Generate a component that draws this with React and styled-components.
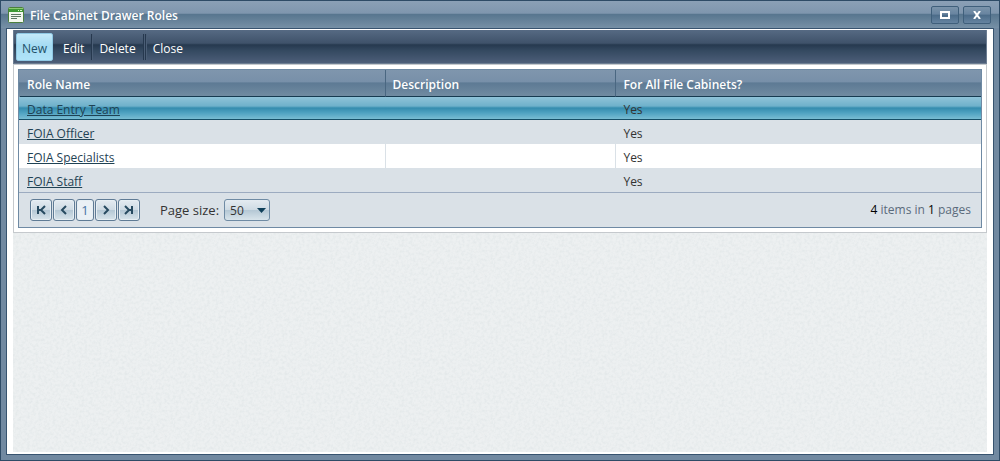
import React, { useState } from 'react'
import styled, { createGlobalStyle } from 'styled-components'

const roles = [
  { name: 'Data Entry Team', description: '', all: 'Yes' },
  { name: 'FOIA Officer', description: '', all: 'Yes' },
  { name: 'FOIA Specialists', description: '', all: 'Yes' },
  { name: 'FOIA Staff', description: '', all: 'Yes' },
]

// paper grain behind the grid
const grain = `url("data:image/svg+xml,${encodeURIComponent(
  '<svg xmlns="http://www.w3.org/2000/svg" width="160" height="160"><filter id="n"><feTurbulence type="fractalNoise" baseFrequency="0.35" numOctaves="3" stitchTiles="stitch"/><feColorMatrix values="0 0 0 0 0.5  0 0 0 0 0.58  0 0 0 0 0.6  0.4 0 0 0 -0.15"/></filter><rect width="160" height="160" filter="url(#n)"/></svg>'
).replace(/\(/g, '%28').replace(/\)/g, '%29')}")`

const App = () => {
  const [selected, setselected] = useState(0)
  const [size, setsize] = useState('50')

  return (<>
    <GlobalStyle />
    <Window>
      <TitleBar>
        <WindowIcon />
        <Title>File Cabinet Drawer Roles</Title>
        <WindowButton type="button" aria-label="Maximize">
          <svg width="10" height="8" viewBox="0 0 10 8">
            <rect x="1" y="1" width="8" height="6" fill="none" stroke="#fff" strokeWidth="2" />
          </svg>
        </WindowButton>
        <WindowButton type="button" aria-label="Close window">
          <svg width="8" height="8" viewBox="0 0 8 8">
            <path d="M1 0L7 8M7 0L1 8" stroke="#fff" strokeWidth="2" />
          </svg>
        </WindowButton>
      </TitleBar>

      <Content>
        <Toolbar>
          <ToolButton type="button" $active>New</ToolButton>
          <ToolButton type="button">Edit</ToolButton>
          <Divider />
          <ToolButton type="button">Delete</ToolButton>
          <Divider />
          <Divider />
          <ToolButton type="button">Close</ToolButton>
        </Toolbar>

        <Panel>
          <Grid>
            <Table>
              <colgroup>
                <col width="38%" />
                <col width="24%" />
                <col />
              </colgroup>
              <thead>
                <tr>
                  <HeadCell>Role Name</HeadCell>
                  <HeadCell>Description</HeadCell>
                  <HeadCell>For All File Cabinets?</HeadCell>
                </tr>
              </thead>
              <tbody>
                {roles.map((role, i) => (
                  <Row key={role.name} $selected={i === selected} $alt={i % 2 === 1}
                    onClick={() => setselected(i)}>
                    <Cell><RoleLink href="#">{role.name}</RoleLink></Cell>
                    <Cell>{role.description}</Cell>
                    <Cell>{role.all}</Cell>
                  </Row>
                ))}
              </tbody>
            </Table>

            <Pager>
              <PageButtons>
                <PageButton type="button" aria-label="First page"><Arrow d="M2 1V9M9 1L5 5L9 9M3 5H5" /></PageButton>
                <PageButton type="button" aria-label="Previous page"><Arrow d="M7 1L3 5L7 9" /></PageButton>
                <PageButton type="button" $current>1</PageButton>
                <PageButton type="button" aria-label="Next page"><Arrow d="M3 1L7 5L3 9" /></PageButton>
                <PageButton type="button" aria-label="Last page"><Arrow d="M8 1V9M1 1L5 5L1 9M7 5H5" /></PageButton>
              </PageButtons>
              <SizeLabel htmlFor="page-size">Page size:</SizeLabel>
              <SelectBox>
                <Select id="page-size" value={size} onChange={(e) => setsize(e.target.value)}>
                  <option>10</option>
                  <option>20</option>
                  <option>50</option>
                </Select>
                <Caret width="9" height="5" viewBox="0 0 9 5"><path d="M0 0H9L4.5 5Z" fill="#10405a" /></Caret>
              </SelectBox>
              <Info><b>4</b> items in <b>1</b> pages</Info>
            </Pager>
          </Grid>
        </Panel>
      </Content>
    </Window>
  </>)
}

const WindowIcon = () => (
  <svg width="16" height="16" viewBox="0 0 16 16">
    <rect x="0.5" y="0.5" width="15" height="15" rx="1" fill="#f4f8ef" stroke="#4b7f3c" />
    <rect x="1" y="1" width="14" height="4" fill="#3f9a35" />
    <rect x="1" y="1" width="14" height="1" fill="#8ccb72" />
    <path d="M10 3.5H11M12 3.5H14" stroke="#d9f2c8" />
    <path d="M3 7.5H13M3 9.5H13M3 11.5H9" stroke="#5e7863" />
  </svg>
)

const Arrow = ({ d }) => (
  <svg width="10" height="10" viewBox="0 0 10 10">
    <path d={d} fill="none" stroke="#274a60" strokeWidth="2" />
  </svg>
)

const GlobalStyle = createGlobalStyle`
  * {
    box-sizing: border-box;
  }
  body {
    margin: 0;
    font-family: "Open Sans", "Noto Sans", sans-serif;
    font-size: 12px;
    line-height: 16px;
    color: #333;
  }
  button, select {
    font: inherit;
  }
`

const Window = styled.div`
display: flex;
flex-direction: column;
min-height: 100vh;
padding: 0 5px 5px;
border: 1px solid #2e4b66;
background: #7189a1;
`

const TitleBar = styled.header`
display: flex;
align-items: center;
gap: 4px;
height: 27px;
margin: 0 -5px;
padding: 0 8px 0 7px;
background: linear-gradient(#8ba0b6, #7f96ae 45%, #58768f 50%, #7690a6);
`

const Title = styled.h1`
flex: 1;
margin: 0;
padding: 2px 0 0 2px;
font-size: 12px;
font-weight: 600;
color: #fff;
`

const WindowButton = styled.button`
display: flex;
align-items: center;
justify-content: center;
width: 28px;
height: 18px;
padding: 0;
border: 1px solid #3f5f7b;
border-radius: 2px;
background: linear-gradient(#7b94ab, #6884a0 45%, #4b6b88 50%, #6583a0);
`

const Content = styled.main`
flex: 1;
padding: 1px 6px 2px;
border: 1px solid #37536f;
background:
  ${grain} content-box,
  linear-gradient(#edf0f1, #edf0f1) content-box,
  #fff;
`

const Toolbar = styled.nav`
display: flex;
align-items: center;
height: 34px;
padding: 0 2px;
border: 1px solid #6c7d92;
border-width: 0 1px 1px;
background: linear-gradient(#566a83, #3f526a 40%, #26394f 45%, #344960 62%, #4d5e79);
`

const ToolButton = styled.button`
height: 28px;
padding: 4px 5px 0;
margin-right: ${(props) => props.$active ? '4px' : '1px'};
border: 1px solid ${(props) => props.$active ? '#8fc8e4' : 'transparent'};
border-radius: 2px;
color: ${(props) => props.$active ? '#235168' : '#fff'};
background: ${(props) => props.$active ? 'linear-gradient(#c4e9f9, #a4dbf3 45%, #b0e4f9)' : 'none'};
`

const Divider = styled.span`
width: 2px;
height: 26px;
border-left: 1px solid #26384e;
border-right: 1px solid #4b5e76;
`

const Panel = styled.section`
padding: 4px;
border: 1px solid #c5c9cd;
background: #fff;
`

const Grid = styled.div`
border: 1px solid #6f8aa4;
background: #dae1e7;
`

const Table = styled.table`
width: 100%;
table-layout: fixed;
border-collapse: separate;
border-spacing: 0;
`

const HeadCell = styled.th`
height: 27px;
padding: 3px 7px 0;
border-left: 1px solid #4a6781;
border-bottom: 1px solid #163a50;
text-align: left;
font-weight: 600;
color: #fff;
background: linear-gradient(#7f96ad, #7890a9 45%, #5d7a94 50%, #718ba1);
&:first-child {
  border-left-color: transparent;
}
`

const Cell = styled.td`
height: 24px;
padding: 3px 7px 0;
border-left: 1px solid #dae1e7;
&:first-child {
  border-left-color: transparent;
}
`

const Row = styled.tr`
background: ${(props) => props.$alt ? '#dae1e7' : '#fff'};
${(props) => props.$selected && `
  ${Cell} {
    height: 23px;
    border-left-color: transparent;
    background: linear-gradient(#8fc3d8, #6fb1cb 9px, #348cae 11px, #50a3c2 16px, #79bdd3 22px, #175068 22px);
  }
`}
`

const RoleLink = styled.a`
color: #1f4254;
`

const Pager = styled.footer`
display: flex;
align-items: center;
height: 35px;
padding: 0 10px 0 11px;
border-top: 1px solid #9cabc0;
`

const PageButtons = styled.div`
display: flex;
gap: 1px;
margin-right: 20px;
`

const PageButton = styled.button`
display: flex;
align-items: center;
justify-content: center;
width: ${(props) => props.$current ? '18px' : '22px'};
height: 22px;
padding: 0;
border: 1px solid #5f7b95;
border-radius: 3px;
font-size: 13px;
color: #4772a4;
background: ${(props) => props.$current ? '#eaf0f5' : 'linear-gradient(#e4ebf1, #cfdbe4 48%, #b5c8d5 52%, #d8e4eb)'};
box-shadow: inset 0 0 0 1px #e6eef3;
`

const SizeLabel = styled.label`
margin-right: 5px;
font-size: 13px;
`

const SelectBox = styled.span`
position: relative;
display: flex;
`

const Select = styled.select`
appearance: none;
width: 46px;
height: 22px;
padding: 2px 5px 0;
border: 1px solid #6f8ba4;
border-radius: 3px;
color: #333;
background: linear-gradient(#e4ebf1, #cfdbe4 48%, #b5c8d5 52%, #d8e4eb);
`

// sits over the right end of the select
const Caret = styled.svg`
position: absolute;
right: 4px;
top: 9px;
pointer-events: none;
`

const Info = styled.p`
margin: 0 0 0 auto;
color: #5a6b7c;
b {
  font-weight: 400;
  color: #000;
}
`

export default App
